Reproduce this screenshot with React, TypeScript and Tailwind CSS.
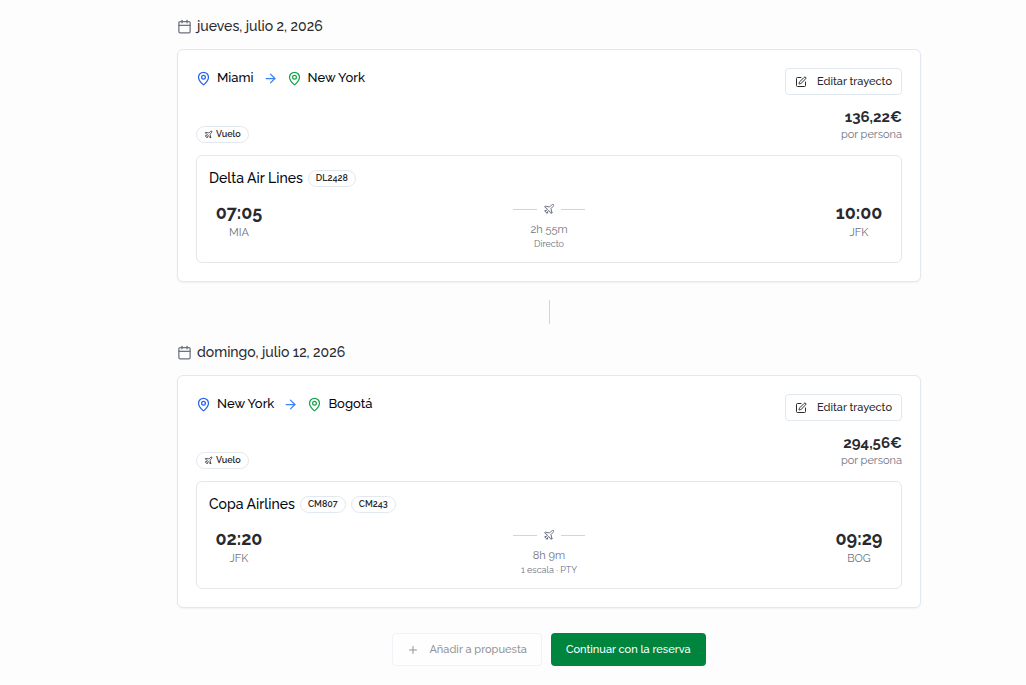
import React from 'react';
import { ArrowRight, Calendar, MapPin, Plane, Plus, SquarePen } from 'lucide-react';

interface Leg {
  date: string;
  from: string;
  to: string;
  price: string;
  airline: string;
  flights: string[];
  departure: { time: string; code: string };
  arrival: { time: string; code: string };
  duration: string;
  stops: string;
}

const LEGS: Leg[] = [
  {
    date: 'jueves, julio 2, 2026',
    from: 'Miami',
    to: 'New York',
    price: '136,22€',
    airline: 'Delta Air Lines',
    flights: ['DL2428'],
    departure: { time: '07:05', code: 'MIA' },
    arrival: { time: '10:00', code: 'JFK' },
    duration: '2h 55m',
    stops: 'Directo',
  },
  {
    date: 'domingo, julio 12, 2026',
    from: 'New York',
    to: 'Bogotá',
    price: '294,56€',
    airline: 'Copa Airlines',
    flights: ['CM807', 'CM243'],
    departure: { time: '02:20', code: 'JFK' },
    arrival: { time: '09:29', code: 'BOG' },
    duration: '8h 9m',
    stops: '1 escala · PTY',
  },
];

function Badge({ children }: { children: React.ReactNode }) {
  return (
    <span className="inline-flex h-[17px] items-center gap-[3px] rounded-full border border-[#e2e8f0] px-[7px] text-[9px] leading-[15px] font-semibold text-[#2a2a2e]">
      {children}
    </span>
  );
}

function Stop({ time, code }: { time: string; code: string }) {
  return (
    <div className="w-[60px] text-center">
      <p className="text-[18px] leading-5 font-bold text-[#2a2a2e]">{time}</p>
      <p className="text-[11px] leading-5 text-[#6b7280]">{code}</p>
    </div>
  );
}

function LegCard({ leg }: { leg: Leg }) {
  return (
    <section>
      {/* Date */}
      <div className="mb-[13px] flex items-center gap-[5px]">
        <Calendar size={15} strokeWidth={2} className="text-[#6b7280]" />
        <h2 className="text-[14px] leading-5 font-medium text-[#2a2a2e]">{leg.date}</h2>
      </div>

      <div className="rounded-md border border-[#e2e8f0] bg-white p-[18px] shadow-xs">
        {/* Route, edit action and price */}
        <div className="flex justify-between">
          <div className="flex flex-col items-start justify-between">
            <h3 className="flex items-center gap-[9px] text-[13px] leading-5 font-medium text-gray-950">
              <span className="flex items-center gap-[6px]">
                <MapPin size={15} className="text-[#2563eb]" />
                {leg.from}
              </span>
              <ArrowRight size={15} className="text-[#3b82f6]" />
              <span className="flex items-center gap-[6px]">
                <MapPin size={15} className="text-[#16a34a]" />
                {leg.to}
              </span>
            </h3>
            <Badge>
              <Plane size={9} />
              Vuelo
            </Badge>
          </div>
          <div className="flex flex-col items-end">
            <button
              type="button"
              className="flex h-[27px] items-center gap-[10px] rounded border border-[#e2e8f0] bg-white px-[9px] text-[11px] leading-[18px] font-medium text-[#2a2a2e]"
            >
              <SquarePen size={12} />
              Editar trayecto
            </button>
            <p className="mt-3 text-[15px] leading-5 font-bold text-[#2a2a2e]">{leg.price}</p>
            <p className="text-[11px] leading-4 text-[#6b7280]">por persona</p>
          </div>
        </div>

        {/* Flight */}
        <div className="mt-3 rounded-md border border-[#e5e7eb] px-3 pt-3 pb-[19px]">
          <div className="flex items-center gap-[5px]">
            <h4 className="text-[14px] leading-5 font-medium text-gray-950">{leg.airline}</h4>
            {leg.flights.map((flight) => (
              <Badge key={flight}>{flight}</Badge>
            ))}
          </div>
          <div className="mt-[15px] flex items-start justify-between">
            <Stop {...leg.departure} />
            <div className="flex h-10 flex-col items-center text-[#6b7280]">
              <div className="flex items-center gap-[6px]">
                <span className="h-px w-6 bg-[#d1d5db]" />
                <Plane size={12} />
                <span className="h-px w-6 bg-[#d1d5db]" />
              </div>
              <p className="mt-[7px] text-[11px] leading-4">{leg.duration}</p>
              <p className="text-[9px] leading-3">{leg.stops}</p>
            </div>
            <Stop {...leg.arrival} />
          </div>
        </div>
      </div>
    </section>
  );
}

export default function App() {
  return (
    <main className="min-h-screen bg-[#fdfdfd] pt-4 pr-[105px] pb-[18px] pl-[177px] font-[Raleway,Lato,sans-serif]">
      {LEGS.map((leg, i) => (
        <React.Fragment key={leg.date}>
          {i > 0 && <div className="mx-auto my-[18px] h-6 w-px bg-[#d1d5db]" />}
          <LegCard leg={leg} />
        </React.Fragment>
      ))}

      <div className="mt-[25px] flex justify-center gap-[9px]">
        <button
          type="button"
          disabled
          className="flex h-[33px] items-center gap-[10px] rounded border border-[#e2e8f0] bg-white px-[14px] text-[11px] leading-[18px] font-medium text-[#2a2a2e] opacity-50"
        >
          <Plus size={12} />
          Añadir a propuesta
        </button>
        <button
          type="button"
          className="h-[33px] rounded bg-[#00853e] px-[15px] text-[11px] leading-[18px] font-medium text-white"
        >
          Continuar con la reserva
        </button>
      </div>
    </main>
  );
}
